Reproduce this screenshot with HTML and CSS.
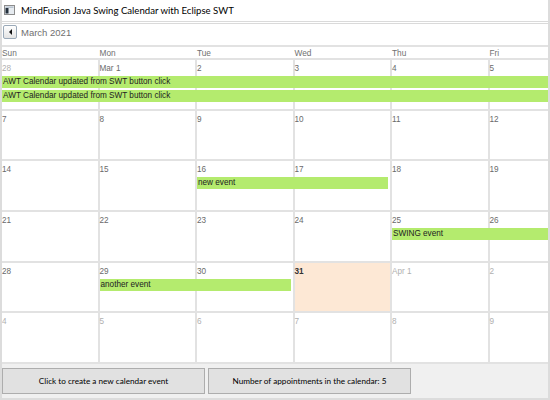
FILE: index.html
```html
<!DOCTYPE html>
<html>
<head>
  <title>MindFusion Java Swing Calendar with Eclipse SWT</title>
  <link rel="stylesheet" href="styles.css">
</head>
<body>

  <div class="window">
    <div class="titlebar">
      <svg class="app-icon" width="11" height="10" viewBox="0 0 11 10">
        <rect x="0.5" y="0.5" width="10" height="9" fill="#e6ebf0" stroke="#8c8c8c"/>
        <rect x="1.5" y="1.5" width="8" height="1.5" fill="#b9c4cf"/>
        <rect x="1.5" y="3" width="3" height="5.5" fill="#24303c"/>
      </svg>
      <span class="title">MindFusion Java Swing Calendar with Eclipse SWT</span>
    </div>

    <div class="calendar">
      <div class="month-header">
        <button class="nav-prev"><span class="arrow"></span></button>
        <span class="month-name">March 2021</span>
      </div>

      <!-- Saturday column is off-screen in the window, kept empty -->
      <div class="day-names">
        <div>Sun</div>
        <div>Mon</div>
        <div>Tue</div>
        <div>Wed</div>
        <div>Thu</div>
        <div>Fri</div>
        <div></div>
      </div>

      <div class="weeks">
        <div class="week">
          <div class="day other">28</div>
          <div class="day">Mar 1</div>
          <div class="day">2</div>
          <div class="day">3</div>
          <div class="day">4</div>
          <div class="day">5</div>
          <div class="day"></div>
          <div class="event row-a" style="grid-column: 1 / 8">AWT Calendar updated from SWT button click</div>
          <div class="event row-b" style="grid-column: 1 / 8">AWT Calendar updated from SWT button click</div>
        </div>

        <div class="week">
          <div class="day">7</div>
          <div class="day">8</div>
          <div class="day">9</div>
          <div class="day">10</div>
          <div class="day">11</div>
          <div class="day">12</div>
          <div class="day"></div>
        </div>

        <div class="week">
          <div class="day">14</div>
          <div class="day">15</div>
          <div class="day">16</div>
          <div class="day">17</div>
          <div class="day">18</div>
          <div class="day">19</div>
          <div class="day"></div>
          <div class="event row-a" style="grid-column: 3 / 5">new event</div>
        </div>

        <div class="week">
          <div class="day">21</div>
          <div class="day">22</div>
          <div class="day">23</div>
          <div class="day">24</div>
          <div class="day">25</div>
          <div class="day">26</div>
          <div class="day"></div>
          <div class="event row-a" style="grid-column: 5 / 8">SWING event</div>
        </div>

        <div class="week">
          <div class="day">28</div>
          <div class="day">29</div>
          <div class="day">30</div>
          <div class="day today">31</div>
          <div class="day other">Apr 1</div>
          <div class="day other">2</div>
          <div class="day other"></div>
          <div class="event row-a" style="grid-column: 2 / 4">another event</div>
        </div>

        <div class="week">
          <div class="day other">4</div>
          <div class="day other">5</div>
          <div class="day other">6</div>
          <div class="day other">7</div>
          <div class="day other">8</div>
          <div class="day other">9</div>
          <div class="day other"></div>
        </div>
      </div>
    </div>

    <div class="button-bar">
      <button class="swt-button">Click to create a new calendar event</button>
      <button class="swt-button">Number of appointments in the calendar: 5</button>
    </div>
  </div>

</body>
</html>
```

FILE: styles.css
```css
body {
  margin: 0;
  padding: 0;
  font-family: "Liberation Sans", Arial, sans-serif;
  background-color: #fff;
}

.window {
  width: 550px;
  height: 400px;
  box-sizing: border-box;
  border: 2px solid #dcdcdc;
  border-top: none;
  overflow: hidden;
  background-color: #fff;
}

.titlebar {
  height: 21px;
  display: flex;
  align-items: center;
  border-bottom: 3px double #dadada;
}

.app-icon {
  margin-left: 2px;
  margin-right: 6px;
  margin-top: -2px;
}

.title {
  font-family: Lato, "Open Sans", sans-serif;
  font-size: 9.6px;
  color: #000;
}

.calendar {
  overflow: hidden;
}

.month-header {
  height: 20px;
  padding-top: 1px;
  display: flex;
  align-items: flex-start;
  border-bottom: 2px solid #e2e2e2;
}

.nav-prev {
  width: 14px;
  height: 14px;
  margin: 0 0 0 1px;
  padding: 0;
  border: 1px solid #9aa9b8;
  border-radius: 2px;
  background: linear-gradient(#ffffff, #e3e3e3);
  display: flex;
  align-items: center;
  justify-content: center;
}

.arrow {
  width: 0;
  height: 0;
  border-top: 3px solid transparent;
  border-bottom: 3px solid transparent;
  border-right: 3px solid #111;
}

.month-name {
  margin-left: 4px;
  padding-top: 1px;
  font-size: 9.5px;
  line-height: 14px;
  color: #707070;
}

.day-names {
  display: grid;
  grid-template-columns: repeat(7, 95.5px);
  column-gap: 2px;
  height: 10px;
  padding-top: 1px;
  border-bottom: 2px solid #e2e2e2;
  font-size: 8.3px;
  line-height: 10px;
  color: #707070;
}

.weeks {
  height: 304px;
  display: flex;
  flex-direction: column;
}

.week {
  flex: 1;
  display: grid;
  grid-template-columns: repeat(7, 95.5px);
  grid-template-rows: 16px 14px 14px 1fr;
  column-gap: 2px;
  padding-bottom: 2px;
  background-color: #e2e2e2;
  font-size: 8.2px;
}

.day {
  grid-row: 1 / -1;
  padding-top: 3px;
  line-height: 12px;
  background-color: #fff;
  color: #6a6a6a;
}

.day:nth-child(1) { grid-column: 1; }
.day:nth-child(2) { grid-column: 2; }
.day:nth-child(3) { grid-column: 3; }
.day:nth-child(4) { grid-column: 4; }
.day:nth-child(5) { grid-column: 5; }
.day:nth-child(6) { grid-column: 6; }
.day:nth-child(7) { grid-column: 7; }

.day.other {
  color: #b0b0b0;
}

.day.today {
  background-color: #fde8d5;
  color: #333;
  font-weight: bold;
}

.event {
  height: 12px;
  margin-right: 2px;
  padding-left: 1px;
  line-height: 12px;
  background-color: #b4eb6e;
  color: #222;
  white-space: nowrap;
  overflow: hidden;
}

.event.row-a {
  grid-row: 2;
}

.event.row-b {
  grid-row: 3;
}

.button-bar {
  height: 36px;
  box-sizing: border-box;
  padding-top: 4px;
  display: flex;
  gap: 3px;
  background-color: #f0f0f0;
}

.swt-button {
  width: 203px;
  height: 26px;
  margin: 0;
  padding: 0;
  border: 1px solid #adadad;
  background-color: #e1e1e1;
  font-family: Lato, "Open Sans", sans-serif;
  font-size: 8.2px;
  color: #000;
}
```
